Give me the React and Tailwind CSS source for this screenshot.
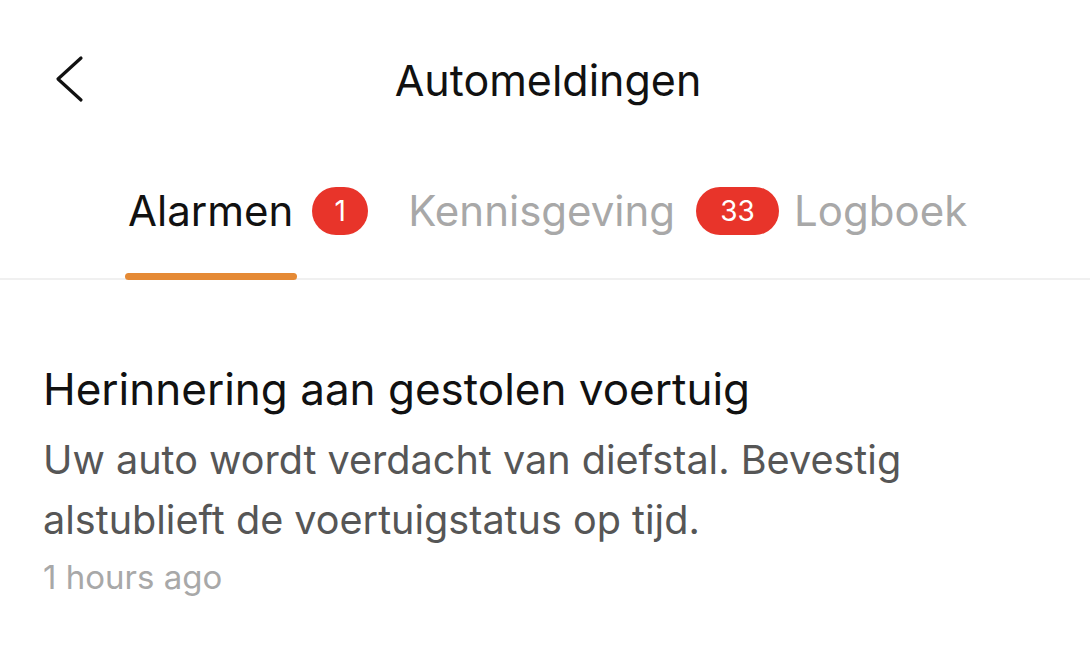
export default function App() {
  return (
    <div className="w-[1090px] h-[652px] bg-white overflow-hidden" style={{ fontFamily: 'Inter, "Noto Sans", sans-serif' }}>
      <div className="relative h-[160px] flex items-start justify-center">
        <button className="absolute left-[54px] top-[55px] w-[32px] h-[48px]">
          <svg viewBox="0 0 32 48" className="w-[32px] h-[48px]" fill="none" stroke="#111" strokeWidth="3.2" strokeLinecap="round" strokeLinejoin="round">
            <path d="M27 3 L4 24 L27 45" />
          </svg>
        </button>
        <h1 className="mt-[55px] ml-[6px] text-[43px] leading-[50px] text-[#111]">Automeldingen</h1>
      </div>

      <div className="flex items-start pl-[128px] pt-[27px] h-[120px] border-b-2 border-[#f0f0f0]">
        <div className="flex items-center h-[48px]">
          <div className="relative">
            <span className="text-[42px] leading-[48px] text-[#111]">Alarmen</span>
            <span className="absolute left-[-3px] right-[-4px] bottom-[-45px] h-[7px] rounded-full bg-[#e58a35]"></span>
          </div>
          <span className="ml-[19px] w-[56px] h-[48px] rounded-full bg-[#e8342a] text-white text-[28px] flex items-center justify-center">1</span>
          <span className="ml-[40px] text-[42px] leading-[48px] text-[#a8a8a8]">Kennisgeving</span>
          <span className="ml-[21px] w-[83px] h-[48px] rounded-full bg-[#e8342a] text-white text-[28px] flex items-center justify-center">33</span>
          <span className="ml-[15px] text-[42px] leading-[48px] text-[#a8a8a8]">Logboek</span>
        </div>
      </div>

      <div className="px-[43px] pt-[83px]">
        <h2 className="text-[44px] leading-[52px] text-[#111]">Herinnering aan gestolen voertuig</h2>
        <p className="mt-[15px] text-[39.6px] leading-[60px] text-[#565656]">
          Uw auto wordt verdacht van diefstal. Bevestig
          <br />
          alstublieft de voertuigstatus op tijd.
        </p>
        <p className="mt-[7px] text-[33px] leading-[40px] text-[#a8a8a8]">1 hours ago</p>
      </div>
    </div>
  );
}
